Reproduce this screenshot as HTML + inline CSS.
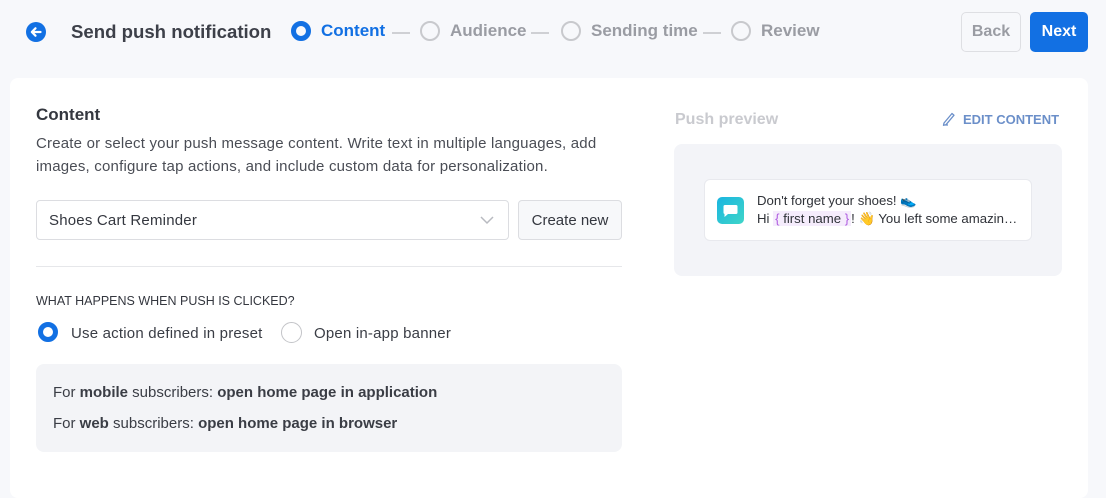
<!DOCTYPE html>
<html><head><meta charset="utf-8"><style>
*{margin:0;padding:0;box-sizing:border-box}
body{width:1106px;height:476px;background:#f7f8fb;font-family:"Liberation Sans",Arial,sans-serif;position:relative;overflow:hidden;color:#3a3d45}
.a{position:absolute}
.step{position:absolute;top:21px;display:flex;align-items:center;font-size:17px;font-weight:bold;color:#9a9ca3}
.rad{width:20px;height:20px;border-radius:50%;border:2.5px solid #c8c9cd;margin-right:10px}
.rad.on{border:5.5px solid #1270e3}
.dash{position:absolute;top:32px;width:18px;height:1.5px;background:#cfd0d4}
.card{left:10px;top:78px;width:1078px;height:420px;background:#fff;border-radius:8px}
.t{letter-spacing:0.2px}
</style></head><body>
<svg class="a" style="left:26px;top:22px" width="20" height="20" viewBox="0 0 20 20"><circle cx="10" cy="10" r="10" fill="#1270e3"/><path d="M14.5 10H6M9.5 6.3L5.8 10l3.7 3.7" stroke="#fff" stroke-width="2.2" fill="none" stroke-linecap="round" stroke-linejoin="round"/></svg>
<div class="a" style="left:71px;top:21px;font-size:18.6px;font-weight:bold;color:#3d4049">Send push notification</div>
<div class="step" style="left:291px;color:#1270e3"><div class="rad on"></div>Content</div>
<div class="dash" style="left:392px"></div>
<div class="step" style="left:420px"><div class="rad"></div>Audience</div>
<div class="dash" style="left:531px"></div>
<div class="step" style="left:561px"><div class="rad"></div>Sending time</div>
<div class="dash" style="left:703px"></div>
<div class="step" style="left:731px"><div class="rad"></div>Review</div>
<div class="a" style="left:961px;top:12px;width:60px;height:40px;border:1px solid #dedfe3;border-radius:5px;color:#9a9ca3;font-size:16px;font-weight:bold;text-align:center;line-height:38px">Back</div>
<div class="a" style="left:1030px;top:12px;width:58px;height:40px;background:#1270e3;border-radius:5px;color:#fff;font-size:16px;font-weight:bold;text-align:center;line-height:40px">Next</div>
<div class="a card"></div>
<div class="a" style="left:36px;top:105px;font-size:17px;font-weight:bold;color:#34373f">Content</div>
<div class="a t" style="left:36px;top:132px;width:590px;font-size:15px;line-height:23px;color:#4a4d55">Create or select your push message content. Write text in multiple languages, add images, configure tap actions, and include custom data for personalization.</div>
<div class="a t" style="left:36px;top:200px;width:473px;height:40px;border:1px solid #dcdde1;border-radius:4px;font-size:15px;line-height:39px;padding-left:12px;color:#34373f">Shoes Cart Reminder</div>
<svg class="a" style="left:480px;top:215px" width="14" height="10" viewBox="0 0 14 10"><path d="M1 2l6 6 6-6" stroke="#b8bac0" stroke-width="1.5" fill="none"/></svg>
<div class="a" style="left:518px;top:200px;width:104px;height:40px;border:1px solid #dcdde1;border-radius:4px;background:#f7f8fa;font-size:15px;line-height:39px;text-align:center;color:#34373f">Create new</div>
<div class="a" style="left:36px;top:266px;width:586px;height:1px;background:#e6e7ea"></div>
<div class="a" style="left:36px;top:294px;font-size:12.5px;color:#34373f">WHAT HAPPENS WHEN PUSH IS CLICKED?</div>
<div class="a" style="left:38px;top:322px;width:20px;height:20px;border-radius:50%;border:5.5px solid #1270e3"></div>
<div class="a t" style="left:71px;top:325px;font-size:15px;color:#3a3d45">Use action defined in preset</div>
<div class="a" style="left:281px;top:322px;width:21px;height:21px;border-radius:50%;border:1.5px solid #c3c4c8"></div>
<div class="a t" style="left:314px;top:325px;font-size:15px;color:#3a3d45">Open in-app banner</div>
<div class="a" style="left:36px;top:364px;width:586px;height:88px;background:#f3f4f7;border-radius:8px"></div>
<div class="a" style="left:53px;top:384px;font-size:15px;color:#3a3d45">For <b>mobile</b> subscribers: <b>open home page in application</b></div>
<div class="a" style="left:53px;top:415px;font-size:15px;color:#3a3d45">For <b>web</b> subscribers: <b>open home page in browser</b></div>
<div class="a" style="left:675px;top:111px;font-size:16px;font-weight:bold;color:#c9cacf">Push preview</div>
<svg class="a" style="left:942px;top:111px" width="14" height="15" viewBox="0 0 14 15"><path d="M2 12L10 2.5l2 1.7-8 9.5-2.5.6z M1 14h5" stroke="#6b8fc9" stroke-width="1.3" fill="none" stroke-linejoin="round"/></svg>
<div class="a" style="left:963px;top:112px;font-size:13px;font-weight:bold;color:#6b8fc9">EDIT CONTENT</div>
<div class="a" style="left:674px;top:144px;width:388px;height:132px;background:#f3f4f8;border-radius:8px"></div>
<div class="a" style="left:704px;top:179px;width:328px;height:62px;background:#fff;border-radius:6px;border:1px solid #e8e9ee"></div>
<svg class="a" style="left:717px;top:197px" width="27" height="27" viewBox="0 0 27 27"><defs><linearGradient id="g" x1="0" y1="0" x2="1" y2="1"><stop offset="0" stop-color="#1ab5e0"/><stop offset="1" stop-color="#3fd5c8"/></linearGradient></defs><rect width="27" height="27" rx="5" fill="url(#g)"/><path d="M8 8h11a1.5 1.5 0 0 1 1.5 1.5v6a1.5 1.5 0 0 1-1.5 1.5h-8l-3.5 3v-3a1.5 1.5 0 0 1-1-1.5v-6A1.5 1.5 0 0 1 8 8z" fill="#fff"/></svg>
<div class="a" style="left:757px;top:193px;font-size:13.2px;color:#2f3238">Don't forget your shoes! 👟</div>
<div class="a" style="left:757px;top:211px;font-size:13.2px;color:#2f3238;white-space:nowrap">Hi <span style="background:#f5ecfc;padding:0 2px"><span style="color:#b05ee0">{</span> first name <span style="color:#b05ee0">}</span></span>! 👋 You left some amazin…</div>
</body></html>
